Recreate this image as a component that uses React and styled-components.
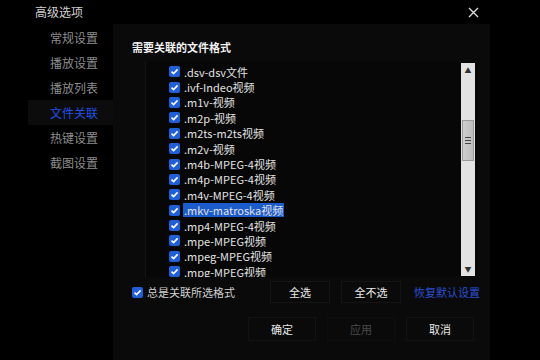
import React from 'react';
import styled, { createGlobalStyle } from 'styled-components';

const formats = [
  '.dsv-dsv文件',
  '.ivf-Indeo视频',
  '.m1v-视频',
  '.m2p-视频',
  '.m2ts-m2ts视频',
  '.m2v-视频',
  '.m4b-MPEG-4视频',
  '.m4p-MPEG-4视频',
  '.m4v-MPEG-4视频',
  '.mkv-matroska视频',
  '.mp4-MPEG-4视频',
  '.mpe-MPEG视频',
  '.mpeg-MPEG视频',
  '.mpg-MPEG视频',
];

const menu = ['常规设置', '播放设置', '播放列表', '文件关联', '热键设置', '截图设置'];

const GlobalStyle = createGlobalStyle`
  html, body {
    margin: 0;
    padding: 0;
    background: #000;
  }
  body {
    font-family: "Noto Sans CJK SC", "Noto Sans", sans-serif;
  }
`;

const Check = () => (
  <svg width="9" height="9" viewBox="0 0 9 9">
    <path d="M1.5 4.6 L3.6 6.6 L7.6 2.4" fill="none" stroke="#fff" strokeWidth="1.6" />
  </svg>
);

export default function App() {
  return (
    <Window>
      <GlobalStyle />
      <TitleBar>
        <Title>高级选项</Title>
        <Close>
          <svg width="11" height="11" viewBox="0 0 11 11">
            <path d="M1 1 L10 10 M10 1 L1 10" stroke="#e0e0e0" strokeWidth="1.3" />
          </svg>
        </Close>
      </TitleBar>
      <Body>
        <Sidebar>
          {menu.map((m) => (
            <MenuItem key={m} $active={m === '文件关联'}>{m}</MenuItem>
          ))}
        </Sidebar>
        <Panel>
          <Heading>需要关联的文件格式</Heading>
          <ListBox>
            <Items>
              {formats.map((f) => (
                <Row key={f}>
                  <Box><Check /></Box>
                  <Label $selected={f.startsWith('.mkv')}>{f}</Label>
                </Row>
              ))}
            </Items>
            <Scrollbar>
              <Arrow>▲</Arrow>
              <Track>
                <Thumb>
                  <Grip />
                  <Grip />
                  <Grip />
                </Thumb>
              </Track>
              <Arrow>▼</Arrow>
            </Scrollbar>
          </ListBox>
          <OptionsRow>
            <AlwaysLabel>
              <Box><Check /></Box>
              <span>总是关联所选格式</span>
            </AlwaysLabel>
            <SmallButton>全选</SmallButton>
            <SmallButton>全不选</SmallButton>
            <Link>恢复默认设置</Link>
          </OptionsRow>
          <ActionRow>
            <ActionButton>确定</ActionButton>
            <ActionButton $disabled>应用</ActionButton>
            <ActionButton>取消</ActionButton>
          </ActionRow>
        </Panel>
      </Body>
    </Window>
  );
}

const Window = styled.div`
  width: 540px;
  height: 360px;
  background: #000;
  display: flex;
  flex-direction: column;
  overflow: hidden;
`;

const TitleBar = styled.div`
  height: 24px;
  display: flex;
  align-items: center;
  justify-content: space-between;
  padding: 0 61px 0 35px;
`;

const Title = styled.div`
  color: #cfcfcf;
  font-size: 12px;
  line-height: 24px;
`;

const Close = styled.div`
  display: flex;
  align-items: center;
`;

const Body = styled.div`
  flex: 1;
  display: flex;
  padding-right: 50px;
`;

const Sidebar = styled.div`
  width: 85px;
  margin-left: 28px;
  padding-top: 1px;
  display: flex;
  flex-direction: column;
`;

const MenuItem = styled.div`
  height: 25px;
  line-height: 25px;
  padding-left: 22px;
  font-size: 12px;
  color: ${(p) => (p.$active ? '#2250e8' : '#8c8c8c')};
  background: ${(p) => (p.$active ? '#0c0c0c' : 'transparent')};
`;

const Panel = styled.div`
  flex: 1;
  background: #0a0a0a;
  padding: 15px 0 0 19px;
  display: flex;
  flex-direction: column;
`;

const Heading = styled.div`
  color: #f2f2f2;
  font-size: 11px;
  font-weight: 700;
  line-height: 16px;
`;

const ListBox = styled.div`
  margin: 6px 13px 0 13px;
  height: 216px;
  border-left: 1px solid #151515;
  background: #070707;
  display: flex;
  overflow: hidden;
`;

const Items = styled.div`
  flex: 1;
  padding: 3px 0 0 23px;
  display: flex;
  flex-direction: column;
`;

const Row = styled.div`
  height: 15.4px;
  display: flex;
  align-items: center;
  gap: 3px;
  flex-shrink: 0;
`;

const Box = styled.span`
  width: 11px;
  height: 11px;
  border-radius: 2px;
  background: #1f5fd8;
  display: inline-flex;
  align-items: center;
  justify-content: center;
  flex-shrink: 0;
`;

const Label = styled.span`
  font-size: 11px;
  line-height: 14px;
  color: #e2e2e2;
  padding: 0 1px;
  background: ${(p) => (p.$selected ? '#1c5bcc' : 'transparent')};
`;

const Scrollbar = styled.div`
  width: 14px;
  margin: 2px 2px 1px 0;
  background: #e3e3e3;
  display: flex;
  flex-direction: column;
`;

const Arrow = styled.div`
  height: 14px;
  font-size: 7px;
  line-height: 14px;
  text-align: center;
  color: #333;
`;

const Track = styled.div`
  flex: 1;
  padding-top: 43px;
`;

const Thumb = styled.div`
  margin: 0 1px;
  height: 41px;
  background: linear-gradient(to right, #cfcfcf, #bdbdbd);
  border: 1px solid #9a9a9a;
  box-sizing: border-box;
  display: flex;
  flex-direction: column;
  justify-content: center;
  align-items: center;
  gap: 2px;
`;

const Grip = styled.div`
  width: 6px;
  height: 1px;
  background: #444;
`;

const OptionsRow = styled.div`
  margin-top: 4px;
  height: 22px;
  display: flex;
  align-items: center;
`;

const AlwaysLabel = styled.label`
  width: 138px;
  display: flex;
  align-items: center;
  gap: 4px;
  font-size: 11px;
  color: #cfcfcf;
`;

const SmallButton = styled.div`
  width: 60px;
  height: 22px;
  box-sizing: border-box;
  border: 1px solid #141414;
  margin-right: 11px;
  display: flex;
  align-items: center;
  justify-content: center;
  font-size: 11px;
  color: #e8e8e8;
`;

const Link = styled.div`
  margin-left: 2px;
  font-size: 11px;
  color: #2a50d8;
`;

const ActionRow = styled.div`
  margin-top: 14px;
  padding-left: 116px;
  display: flex;
  gap: 11px;
`;

const ActionButton = styled.div`
  width: 68px;
  height: 24px;
  box-sizing: border-box;
  border: 1px solid ${(p) => (p.$disabled ? '#0e0e0e' : '#131313')};
  display: flex;
  align-items: center;
  justify-content: center;
  font-size: 11px;
  color: ${(p) => (p.$disabled ? '#4a4a4a' : '#e8e8e8')};
`;
